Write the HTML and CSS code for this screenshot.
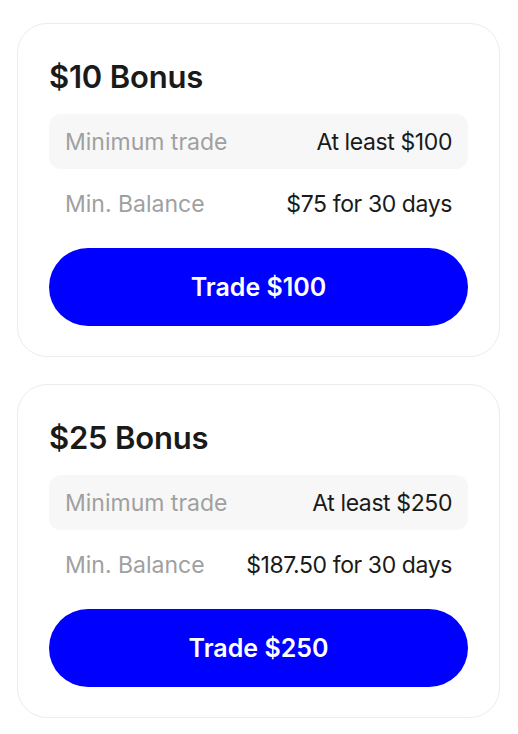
FILE: index.html
```html
<!DOCTYPE html>
<html lang="en">
<head>
    <meta charset="UTF-8">
    <meta name="viewport" content="width=device-width, initial-scale=1.0">
    <title>Bonus Offers</title>
    <link rel="stylesheet" href="styles.css">
</head>
<body>
    <div class="offers">
        <div class="card">
            <h2 class="card-title">$10 Bonus</h2>
            <div class="row shaded">
                <span class="label">Minimum trade</span>
                <span class="value">At least $100</span>
            </div>
            <div class="row">
                <span class="label">Min. Balance</span>
                <span class="value">$75 for 30 days</span>
            </div>
            <button class="trade-btn">Trade $100</button>
        </div>

        <div class="card">
            <h2 class="card-title">$25 Bonus</h2>
            <div class="row shaded">
                <span class="label">Minimum trade</span>
                <span class="value">At least $250</span>
            </div>
            <div class="row">
                <span class="label">Min. Balance</span>
                <span class="value">$187.50 for 30 days</span>
            </div>
            <button class="trade-btn">Trade $250</button>
        </div>
    </div>
</body>
</html>
```

FILE: styles.css
```css
body {
    margin: 0;
    padding: 23px 18px 0 17px;
    background: #fff;
    color: #1a1a1a;
    font-family: Inter, "Noto Sans", sans-serif;
}
.offers {
    display: flex;
    flex-direction: column;
    gap: 27px;
}
.card {
    border: 1px solid #ececec;
    border-radius: 30px;
    padding: 31px 31px 30px;
    display: flex;
    flex-direction: column;
}
.card-title {
    margin: 0 0 15px;
    font-size: 31px;
    line-height: 44px;
    font-weight: 600;
    letter-spacing: -0.2px;
}
.row {
    height: 55px;
    padding: 0 16px;
    display: flex;
    justify-content: space-between;
    align-items: center;
    font-size: 23px;
    border-radius: 12px;
}
.row + .row {
    margin-top: 7px;
}
.shaded {
    background: #f7f7f7;
}
.label {
    color: #a0a0a0;
}
.value {
    color: #1a1a1a;
    letter-spacing: -0.4px;
}
.trade-btn {
    margin-top: 17px;
    height: 78px;
    border: none;
    border-radius: 39px;
    background: #0000ff;
    color: #fff;
    font-family: inherit;
    font-size: 25px;
    font-weight: 600;
    cursor: pointer;
}
```
